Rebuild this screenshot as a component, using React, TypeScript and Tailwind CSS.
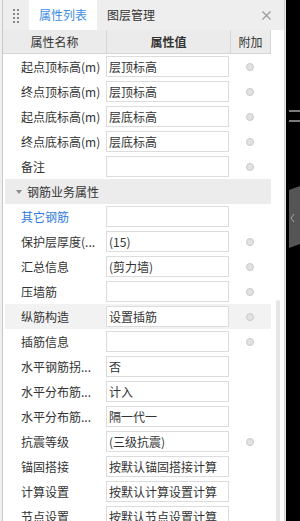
import React from "react";

type Row = { label: string; value?: string; dot?: boolean; blue?: boolean; hl?: boolean };

const rowsA: Row[] = [
  { label: "起点顶标高(m)", value: "层顶标高", dot: true },
  { label: "终点顶标高(m)", value: "层顶标高", dot: true },
  { label: "起点底标高(m)", value: "层底标高", dot: true },
  { label: "终点底标高(m)", value: "层底标高", dot: true },
  { label: "备注", value: "", dot: true },
];

const rowsB: Row[] = [
  { label: "其它钢筋", value: "", blue: true },
  { label: "保护层厚度(...", value: "(15)", dot: true },
  { label: "汇总信息", value: "(剪力墙)", dot: true },
  { label: "压墙筋", value: "", dot: true },
  { label: "纵筋构造", value: "设置插筋", dot: true, hl: true },
  { label: "插筋信息", value: "", dot: true },
  { label: "水平钢筋拐...", value: "否" },
  { label: "水平分布筋...", value: "计入" },
  { label: "水平分布筋...", value: "隔一代一" },
  { label: "抗震等级", value: "(三级抗震)", dot: true },
  { label: "锚固搭接", value: "按默认锚固搭接计算" },
  { label: "计算设置", value: "按默认计算设置计算" },
  { label: "节点设置", value: "按默认节点设置计算" },
];

function PropRow({ r }: { r: Row }) {
  return (
    <div className={`flex items-center h-[25px] ml-[2px] w-[266px] shrink-0 ${r.hl ? "bg-[#f2f2f2]" : ""}`}>
      <div
        className={`w-[101px] pl-[16px] whitespace-nowrap leading-[16px] ${
          r.blue ? "text-[#2f7be0]" : "text-[#333333]"
        }`}
      >
        {r.label}
      </div>
      <div className="w-[123px] h-[21px] border border-[#dcdcdc] bg-white pl-[2px] flex items-center whitespace-nowrap leading-[16px] text-[#333333]">
        {r.value}
      </div>
      <div className="flex-1 flex items-center justify-center">
        {r.dot && (
          <div className="w-[8px] h-[8px] rounded-full bg-[#e2e2e2] border border-[#c9c9c9]" />
        )}
      </div>
    </div>
  );
}

export default function App() {
  const dots = [0, 1, 2, 3];
  return (
    <div
      className="w-[300px] h-[521px] flex bg-black overflow-hidden text-[12px] leading-[16px]"
      style={{ fontFamily: '"Noto Sans CJK SC", "Noto Sans", sans-serif' }}
    >
      <div className="w-[2px] bg-[#efefef] shrink-0" />
      <div className="w-px bg-[#c8c8c8] shrink-0" />
      <div className="w-[281px] shrink-0 bg-white flex flex-col">
        {/* Tab bar */}
        <div className="h-[30px] bg-[#eeeeee] flex items-stretch shrink-0">
          <div className="w-[26px] flex items-center justify-center">
            <div className="grid grid-cols-2 gap-x-[2px] gap-y-[2px] pt-[1px]">
              {dots.map((i) => (
                <React.Fragment key={i}>
                  <div className="w-[2px] h-[2px] bg-[#8a8a8a]" />
                  <div className="w-[2px] h-[2px] bg-[#8a8a8a]" />
                </React.Fragment>
              ))}
            </div>
          </div>
          <div className="w-[68px] bg-white flex items-center justify-center text-[#3d8ee6]">属性列表</div>
          <div className="pl-[10px] flex items-center text-[#333333]">图层管理</div>
          <div className="flex-1" />
          <div className="w-[24px] flex items-center justify-start pl-[2px]">
            <svg width="9" height="9" viewBox="0 0 9 9">
              <path d="M0.5 0.5 L8.5 8.5 M8.5 0.5 L0.5 8.5" stroke="#9a9a9a" strokeWidth="1.2" />
            </svg>
          </div>
        </div>
        {/* Body */}
        <div className="flex flex-1 min-h-0">
          <div className="w-[269px] flex flex-col shrink-0">
            <div className="h-[24px] w-[268px] bg-[#ebebeb] border-b border-[#d6d6d6] flex items-stretch shrink-0 text-[#333333]">
              <div className="w-[103px] flex items-center justify-center">属性名称</div>
              <div className="w-[124px] border-l border-[#d6d6d6] flex items-center justify-center font-bold">属性值</div>
              <div className="flex-1 border-l border-r border-[#d6d6d6] flex items-center justify-center">附加</div>
            </div>
            {rowsA.map((r, i) => (
              <PropRow key={"a" + i} r={r} />
            ))}
            <div className="h-[25px] ml-[2px] w-[266px] bg-[#ececec] flex items-center shrink-0 text-[#333333]">
              <div className="w-[22px] flex justify-end pr-[5px]">
                <svg width="6" height="4" viewBox="0 0 6 4">
                  <path d="M0 0 L6 0 L3 4 Z" fill="#8a8a8a" />
                </svg>
              </div>
              <span>钢筋业务属性</span>
            </div>
            {rowsB.map((r, i) => (
              <PropRow key={"b" + i} r={r} />
            ))}
          </div>
          <div className="flex-1 flex flex-col">
            <div className="h-[270px]" />
            <div className="ml-[4px] w-[4px] flex-1 bg-[#e6e6e6] rounded-t-[2px]" />
          </div>
        </div>
      </div>
      <div className="w-px bg-[#cfcfcf] shrink-0" />
      <div className="w-px bg-[#e8e8e8] shrink-0" />
      <div className="flex-1 relative">
        <svg className="absolute left-0 top-0" width="14" height="521" viewBox="0 0 14 521">
          <rect x="3" y="110" width="11" height="2" fill="#7a7a7a" />
          <rect x="3" y="120" width="11" height="2" fill="#7a7a7a" />
          <polygon points="3,190 14,186 14,244 3,248" fill="#555555" />
          <path d="M8 214 L5 218 L8 222" stroke="#a8a8a8" strokeWidth="1" fill="none" />
        </svg>
      </div>
    </div>
  );
}
